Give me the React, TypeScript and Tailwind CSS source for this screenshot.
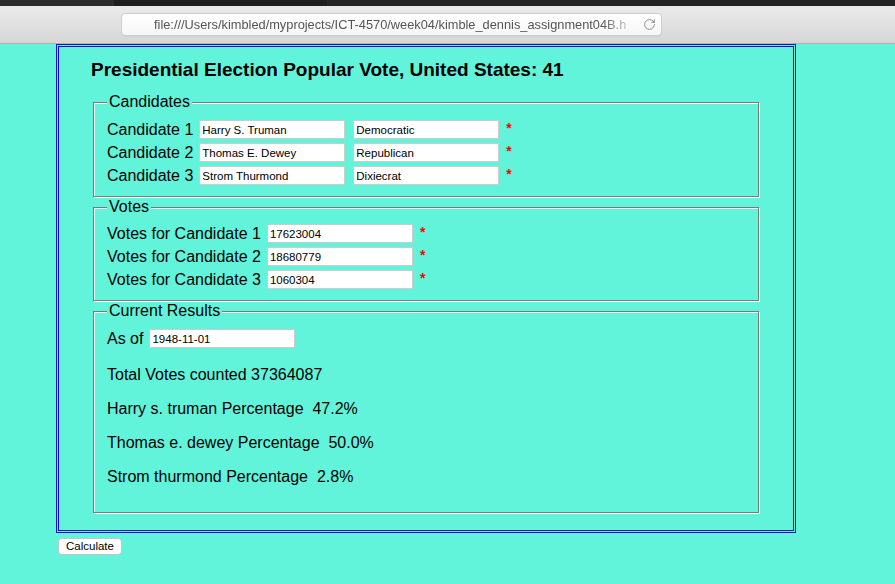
import { RotateCw } from 'lucide-react';
import type { ReactNode } from 'react';

const candidates = [
  { name: 'Harry S. Truman', party: 'Democratic' },
  { name: 'Thomas E. Dewey', party: 'Republican' },
  { name: 'Strom Thurmond', party: 'Dixiecrat' },
];

const votes = ['17623004', '18680779', '1060304'];

const results = [
  'Total Votes counted 37364087',
  'Harry s. truman Percentage  47.2%',
  'Thomas e. dewey Percentage  50.0%',
  'Strom thurmond Percentage  2.8%',
];

const inputClass =
  'h-[19px] w-[146px] border border-[#cbcbcb] bg-white px-[2px] text-[11.5px] text-black outline-none';

function Required() {
  return <span className="ml-[7px] -mt-[4px] text-[14px] font-bold leading-[18px] text-[#ff0000]">*</span>;
}

function Group({ title, className, children }: { title: string; className: string; children: ReactNode }) {
  return (
    <fieldset
      className={`mx-[2px] border border-[#7a7a7a] px-[13px] shadow-[inset_1px_1px_0_#fff,1px_1px_0_#fff] ${className}`}
    >
      <legend className="bg-[#61f4db] px-[2px] text-[16px] leading-[18px]">{title}</legend>
      {children}
    </fieldset>
  );
}

export default function App() {
  return (
    <div className="min-h-screen bg-[#61f4db] font-['Liberation_Sans',Arial,sans-serif] text-black">
      {/* Browser chrome */}
      <div className="flex h-[6px]">
        <div className="w-[114px] bg-[#2c2c2c]" />
        <div className="w-[213px] bg-[#1e1e1e]" />
        <div className="flex-1 bg-[#242424]" />
      </div>
      <div className="h-[38px] border-b border-[#b2b2b2] bg-linear-to-b from-[#ebebeb] to-[#d6d6d6] pl-[121px] pt-[7px]">
        <div className="flex h-[23px] w-[541px] items-center rounded-[4px] border border-[#cfcfcf] bg-linear-to-b from-white to-[#f6f6f6] pl-[32px] shadow-[0_1px_0_rgba(0,0,0,0.04)]">
          <div className="w-[478px] whitespace-nowrap text-[12.8px] leading-[16px] text-[#555] [mask-image:linear-gradient(to_right,#000_calc(100%_-_30px),rgba(0,0,0,0.15))]">
            file:///Users/kimbled/myprojects/ICT-4570/week04/kimble_dennis_assignment04B.h
          </div>
          <RotateCw size={13} strokeWidth={1.6} className="ml-auto mr-[5px] text-[#7d7d7d]" />
        </div>
      </div>

      {/* Page */}
      <div className="ml-[56px] w-[740px] border-[3px] border-double border-[#0d0dcf] px-[32px] pb-[17px] pt-[12px]">
        <h1 className="mb-[12px] text-[19px] font-bold leading-[22px]">
          Presidential Election Popular Vote, United States: 41
        </h1>

        <Group title="Candidates" className="pb-[9px] pt-[7px]">
          {candidates.map((c, i) => (
            <div key={c.name} className="flex h-[23px] items-center text-[16px]">
              <span>Candidate {i + 1}</span>
              <input readOnly value={c.name} className={`ml-[6px] ${inputClass}`} />
              <input readOnly value={c.party} className={`ml-[8px] ${inputClass}`} />
              <Required />
            </div>
          ))}
        </Group>

        <Group title="Votes" className="mt-[1px] pb-[9px] pt-[6px]">
          {votes.map((v, i) => (
            <div key={v} className="flex h-[23px] items-center text-[16px]">
              <span>Votes for Candidate {i + 1}</span>
              <input readOnly value={v} className={`ml-[6px] ${inputClass}`} />
              <Required />
            </div>
          ))}
        </Group>

        <Group title="Current Results" className="mt-[1px] pb-[10px] pt-[7px]">
          <div className="flex h-[23px] items-center text-[16px]">
            <span>As of</span>
            <input readOnly value="1948-11-01" className={`ml-[6px] ${inputClass}`} />
          </div>
          <div className="mt-[16px] flex flex-col gap-[16px] pb-[16px]">
            {results.map((r) => (
              <p key={r} className="whitespace-pre text-[16px] leading-[18px]">
                {r}
              </p>
            ))}
          </div>
        </Group>
      </div>

      <button
        type="button"
        className="ml-[58px] mt-[2px] h-[17px] w-[64px] rounded-[4px] border border-[#c4c4c4] bg-white text-[11.5px] leading-[15px] text-black"
      >
        Calculate
      </button>
    </div>
  );
}
